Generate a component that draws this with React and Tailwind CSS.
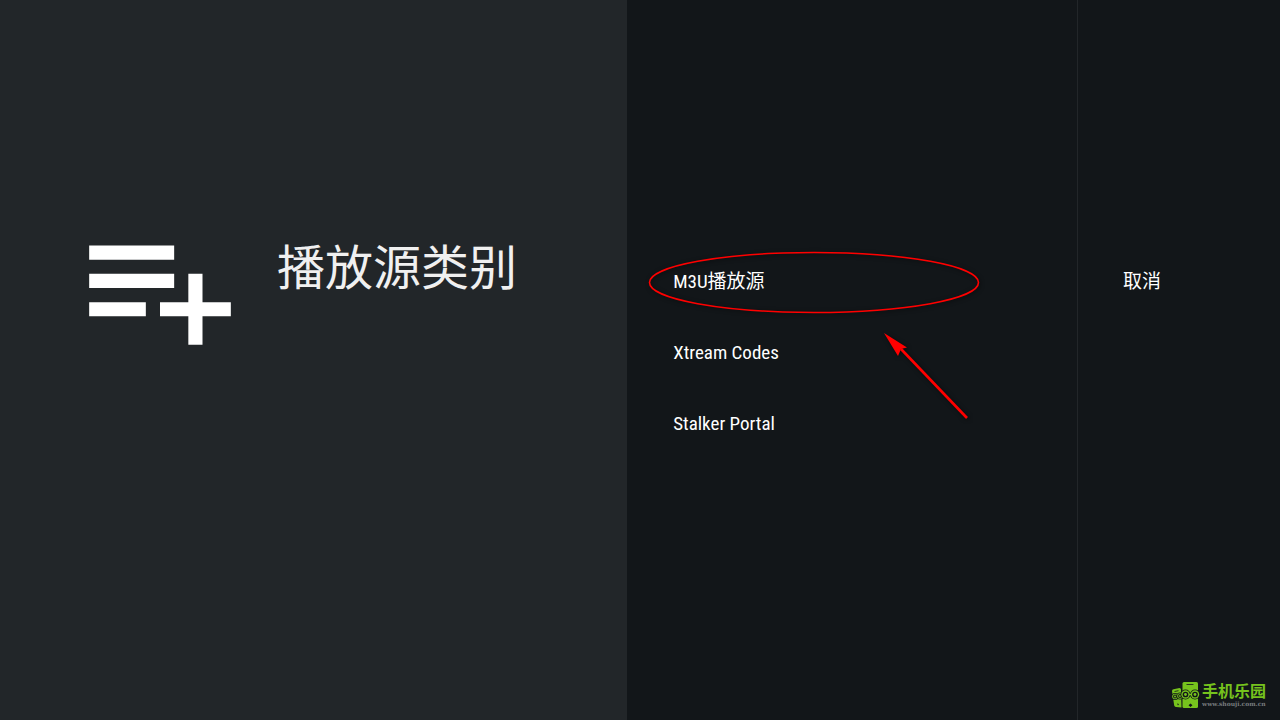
const sources = ['M3U播放源', 'Xtream Codes', 'Stalker Portal'];

function PlaylistAddIcon({ className }) {
  return (
    <svg viewBox="0 0 24 24" fill="currentColor" className={className} aria-hidden="true">
      <path d="M14 10H2v2h12v-2zm0-4H2v2h12V6zm4 8v-4h-2v4h-4v2h4v4h2v-4h4v-2h-4zM2 16h8v-2H2v2z" />
    </svg>
  );
}

// Red ellipse and arrow that point at the first source
function Annotation() {
  return (
    <svg
      viewBox="0 0 340 176"
      className="pointer-events-none absolute -left-7 -top-3 h-[176px] w-[340px] drop-shadow-[1px_1px_2px_rgba(0,0,0,0.6)]"
      fill="none"
      stroke="#ff0000"
      aria-hidden="true"
    >
      <ellipse cx="169" cy="36.5" rx="164.5" ry="30" strokeWidth="1.6" />
      <path d="M256 103L322 172" strokeWidth="2.6" />
      <path d="M239 87L262 101.5L256 103L253 110Z" fill="#ff0000" stroke="none" />
    </svg>
  );
}

// One lens of the phone's glasses
function Lens({ cx, cy, r }) {
  return (
    <>
      <circle cx={cx} cy={cy} r={r + 0.8} fill="#121619" />
      <circle cx={cx} cy={cy} r={r} fill="#76c31d" />
      <circle cx={cx} cy={cy} r={r * 0.68} fill="#121619" />
      <circle cx={cx} cy={cy} r={r * 0.34} fill="#76c31d" />
    </>
  );
}

// Two phones wearing glasses
function PhonesLogo() {
  return (
    <svg viewBox="0 0 30 28" className="h-7 w-[30px]" aria-hidden="true">
      <g fill="#76c31d">
        <path d="M1 10Q1 8.500 2.500 8.200L8.500 7Q10 7 10 8.500L10.500 26.500L5 26Q3.500 25.800 3.200 24.500Z" />
        <path d="M11.500 2.500Q11.500 1 13 1H25.500Q27 1 27 2.500V25.500Q27 27 25.500 27H13Q11.500 27 11.500 25.500Z" />
      </g>
      <path d="M15.500 3.500h7M3.500 10.500l4-0.800" stroke="#121619" strokeWidth="0.800" />
      <Lens cx={4} cy={15.5} r={2.8} />
      <Lens cx={9} cy={15} r={2.8} />
      <Lens cx={14.5} cy={13.5} r={4.2} />
      <Lens cx={24} cy={13.5} r={4.2} />
      <path d="M18 13.500h2.500" stroke="#76c31d" strokeWidth="1.400" />
      <path d="M19.500 22.500l2 1.800-2 1.800-2-1.800zM6 22.500l2 0.500-1 1.500z" fill="#121619" />
    </svg>
  );
}

function Watermark() {
  return (
    <div className="absolute right-3.5 bottom-[11px] flex items-center gap-px">
      <PhonesLogo />
      <div className="flex flex-col">
        <span className="text-base leading-[18px] font-bold text-[#76c31d]">手机乐园</span>
        <span className="font-['DejaVu_Serif',serif] text-[6px] leading-[6px] font-bold text-[#777b7e]">
          www.shouji.com.cn
        </span>
      </div>
    </div>
  );
}

export default function App() {
  return (
    <div className="relative flex min-h-screen bg-[#121619] font-['Roboto_Condensed','Noto_Sans_CJK_SC',sans-serif] text-white">
      <header className="flex w-[49%] items-start gap-8 bg-[#222629] pt-[203px] pl-[75px]">
        <PlaylistAddIcon className="h-[170px] w-[170px] shrink-0" />
        <h1 className="pt-[34px] text-5xl leading-[64px] font-normal text-[#f0f0f0]">播放源类别</h1>
      </header>

      <main className="flex-1 pt-[258px]">
        <ul className="flex flex-col gap-[23px] pr-12 pl-[46px]">
          {sources.map((source, index) => (
            <li key={source} className="relative">
              <button type="button" className="h-12 w-full text-left text-[19px] leading-6">
                {source}
              </button>
              {index === 0 && <Annotation />}
            </li>
          ))}
        </ul>
      </main>

      <aside className="w-[203px] border-l border-[#222629] pt-[258px] pl-[45px]">
        <button type="button" className="h-12 text-[19px] leading-6">
          取消
        </button>
      </aside>

      <Watermark />
    </div>
  );
}
